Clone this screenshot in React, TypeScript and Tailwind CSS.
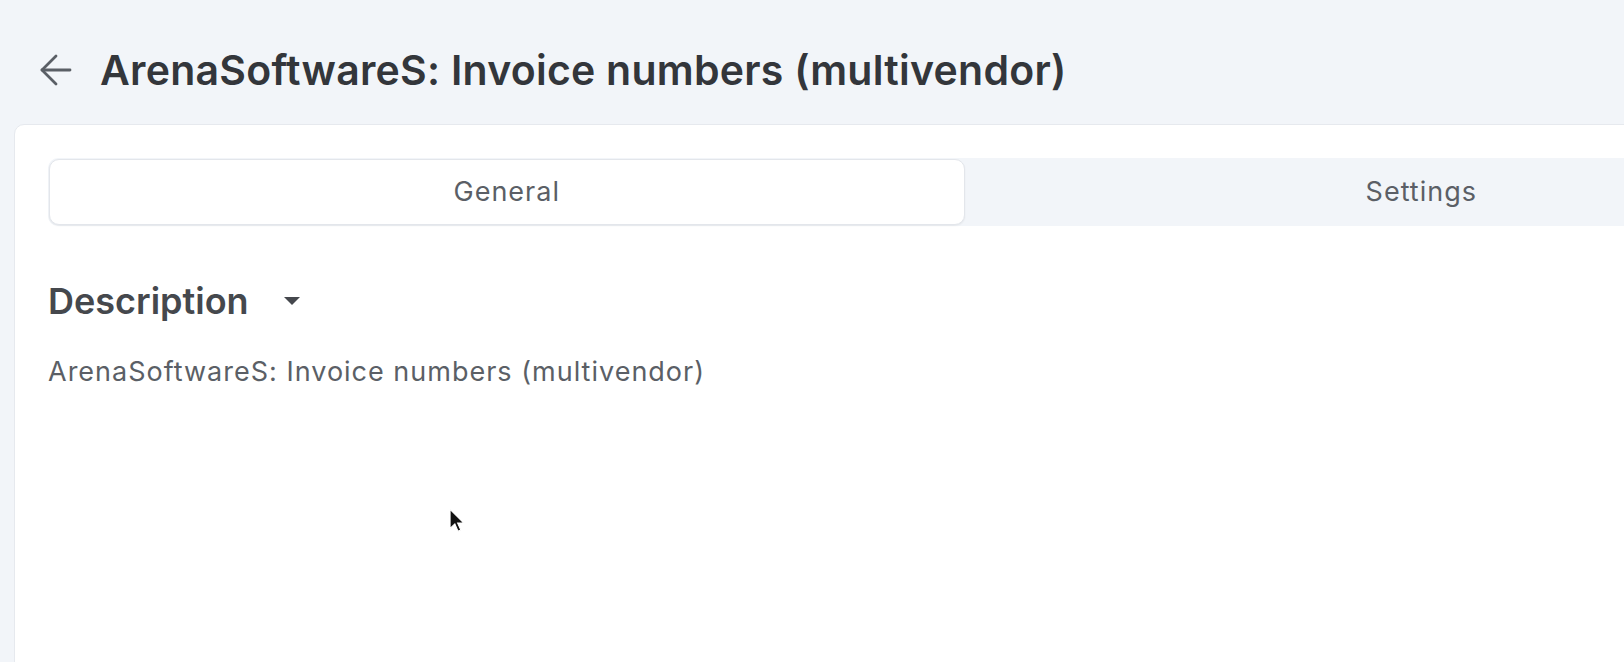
import React from "react";

export default function App() {
  return (
    <div className="w-[1624px] h-[662px] overflow-hidden bg-[#f2f5f9] font-['Inter',sans-serif] relative">
      <div className="w-[1960px]">
        <div className="h-[124px] pt-[16px] flex items-center pl-[32px]">
          <svg width="48" height="48" viewBox="0 0 24 24" fill="none" stroke="#5a5f66" strokeWidth="1.4" strokeLinecap="round" strokeLinejoin="round">
            <path d="M12 19l-7-7 7-7" />
            <path d="M19 12H5" />
          </svg>
          <h1 className="ml-[20px] text-[41px] font-semibold text-[#33363b] tracking-[0.25px] leading-none">
            ArenaSoftwareS: Invoice numbers (multivendor)
          </h1>
        </div>
        <div className="ml-[14px] bg-white border border-[#e6e9ee] rounded-tl-[10px] px-[33px] pt-[33px] h-[600px]">
          <div className="flex w-[1831px] h-[68px] bg-[#f2f5f9] rounded-[10px] p-[1px]">
            <div className="flex-1 flex items-center justify-center bg-white border border-[#e3e6eb] rounded-[10px] shadow-[0_1px_2px_rgba(0,0,0,0.06)] text-[27px] tracking-[1px] text-[#5b5f66]">
              General
            </div>
            <div className="flex-1 flex items-center justify-center text-[27px] tracking-[1px] text-[#5b5f66]">
              Settings
            </div>
          </div>
          <div className="mt-[57px] flex items-center">
            <span className="text-[36px] font-semibold text-[#45484d] leading-none">Description</span>
            <svg className="ml-[34px]" width="18" height="10" viewBox="0 0 18 10">
              <path d="M1 1h16l-8 8z" fill="#45484d" />
            </svg>
          </div>
          <p className="mt-[39px] text-[27px] tracking-[1px] text-[#5b5f66] leading-none">
            ArenaSoftwareS: Invoice numbers (multivendor)
          </p>
        </div>
      </div>
      <svg className="absolute left-[449px] top-[508px]" width="17" height="26" viewBox="0 0 16 24">
        <path d="M1 1v18l4.5-4.2 3 6.8 2.6-1.1-3-6.6H14z" fill="#111" stroke="#fff" strokeWidth="1" />
      </svg>
    </div>
  );
}
